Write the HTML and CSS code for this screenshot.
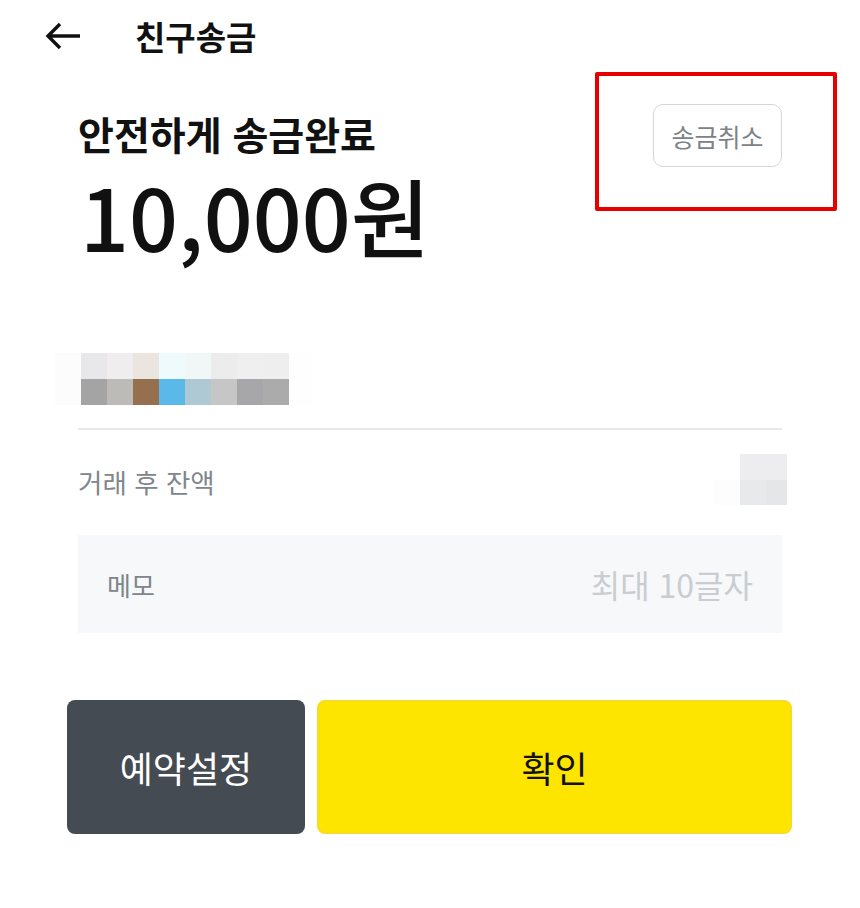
FILE: index.html
```html
<!DOCTYPE html>
<html lang="ko">
<head>
<meta charset="utf-8">
<link rel="stylesheet" href="styles.css">
</head>
<body>
<div class="page">
  <header class="topbar">
    <svg class="back" width="38" height="30" viewBox="0 0 38 30" aria-hidden="true">
      <path d="M36 15 H4 M16 3 L4 15 L16 27" fill="none" stroke="#111" stroke-width="3.4" stroke-linecap="butt" stroke-linejoin="miter"/>
    </svg>
    <h1 class="title">친구송금</h1>
  </header>

  <section class="summary">
    <div class="summary-text">
      <p class="status">안전하게 송금완료</p>
      <p class="amount">10,000원</p>
    </div>
    <button class="cancel">송금취소</button>
    <div class="highlight"></div>
  </section>

  <div class="recipient">
    <div class="mosaic">
      <span style="background:#fcfcfc"></span><span style="background:#e8e8ea"></span><span style="background:#efeded"></span><span style="background:#ebe5e0"></span><span style="background:#effafc"></span><span style="background:#f1f6f7"></span><span style="background:#ececec"></span><span style="background:#efefef"></span><span style="background:#eeeeee"></span><span style="background:#fefefe"></span>
      <span style="background:#fcfcfc"></span><span style="background:#a4a4a4"></span><span style="background:#bcbbb7"></span><span style="background:#956f4e"></span><span style="background:#5bb9ea"></span><span style="background:#aec8d4"></span><span style="background:#c6c6c6"></span><span style="background:#a7a7a9"></span><span style="background:#ababab"></span><span style="background:#fefefe"></span>
    </div>
  </div>

  <div class="divider"></div>

  <div class="balance-row">
    <span class="label">거래 후 잔액</span>
    <div class="mosaic small">
      <span></span><span style="background:#ededef"></span><span style="background:#ededef"></span>
      <span style="background:#fdfdfd"></span><span style="background:#e8e9eb"></span><span style="background:#e5e6e8"></span>
    </div>
  </div>

  <div class="memo">
    <span class="memo-label">메모</span>
    <span class="memo-placeholder">최대 10글자</span>
  </div>

  <div class="actions">
    <button class="btn btn-dark">예약설정</button>
    <button class="btn btn-yellow">확인</button>
  </div>
</div>
</body>
</html>
```

FILE: styles.css
```css
* { box-sizing: border-box; }
html, body { margin: 0; padding: 0; background: #fff; }
body {
  font-family: "Noto Sans CJK KR", "Noto Sans", sans-serif;
  color: #111;
  width: 860px;
  height: 908px;
  overflow: hidden;
}
.page { width: 860px; }

.topbar {
  display: flex;
  align-items: center;
  height: 72px;
  padding-left: 44px;
}
.back { display: block; }
.title {
  margin: 0 0 0 53px;
  font-size: 33px;
  font-weight: 700;
  line-height: 1;
}

.summary {
  position: relative;
  display: flex;
  justify-content: space-between;
  align-items: flex-start;
  padding: 0 78px 0 78px;
}
.summary-text p { margin: 0; }
.status {
  margin-top: 37px !important;
  font-size: 39px;
  font-weight: 700;
  line-height: 48px;
}
.amount {
  margin-top: 8px !important;
  margin-left: 2px !important;
  font-size: 86px;
  font-weight: 500;
  line-height: 100px;
}
.cancel {
  margin-top: 32px;
  width: 129px;
  height: 63px;
  border: 1.5px solid #d3d5d8;
  border-radius: 10px;
  background: #fff;
  color: #7c8288;
  font-family: inherit;
  font-size: 25px;
  padding: 0;
}
.highlight {
  position: absolute;
  left: 595px;
  top: 0;
  width: 242px;
  height: 139px;
  border: 4px solid #e60000;
  border-radius: 2px;
  pointer-events: none;
}

.recipient {
  padding: 88px 0 0 55px;
}
.mosaic {
  display: grid;
  grid-template-columns: repeat(9, 26px) 23px;
  grid-auto-rows: 26px;
}
.mosaic span { display: block; }

.divider {
  margin: 23px 78px 0 78px;
  height: 2px;
  background: #e9e9e9;
}

.balance-row {
  display: flex;
  justify-content: space-between;
  align-items: flex-start;
  padding: 0 73px 0 78px;
  height: 105px;
}
.label {
  font-size: 26.5px;
  line-height: 38px;
  color: #80868c;
  margin-top: 33px;
}
.mosaic.small {
  grid-template-columns: 26px 26px 21px;
  grid-template-rows: 26px 25px;
  margin-top: 24px;
}

.memo {
  margin: 0 78px 0 78px;
  height: 98px;
  background: #f7f8fa;
  display: flex;
  align-items: center;
  justify-content: space-between;
  padding: 0 29px;
}
.memo-label {
  font-size: 26px;
  color: #7e858c;
}
.memo-placeholder {
  font-size: 32px;
  color: #c9cdd2;
}

.actions {
  display: flex;
  gap: 12px;
  margin: 67px 68px 0 67px;
  height: 134px;
}
.btn {
  border-radius: 8px;
  font-family: inherit;
  font-size: 36px;
  padding: 0;
}
.btn-dark {
  width: 238px;
  flex: none;
  background: #454b53;
  color: #fff;
  border: none;
}
.btn-yellow {
  flex: 1;
  background: #fee500;
  color: #111;
  border: 2px solid #f6dc22;
}
```
